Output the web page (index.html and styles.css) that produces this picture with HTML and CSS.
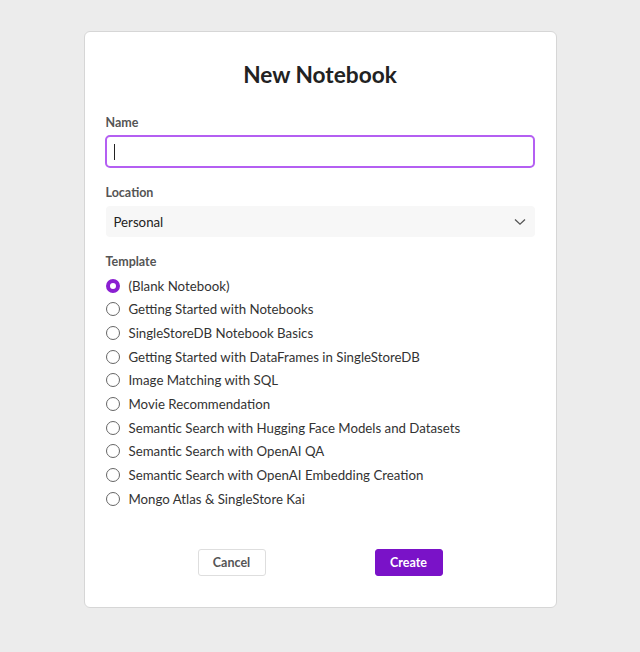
FILE: index.html
```html
<!DOCTYPE html>
<html>
<head>
<meta charset="utf-8">
<link rel="stylesheet" href="styles.css">
</head>
<body>
<div class="card">
  <h1 class="title">New Notebook</h1>
  <div class="field">
    <label class="label">Name</label>
    <div class="input"><span class="caret"></span></div>
  </div>
  <div class="field">
    <label class="label">Location</label>
    <div class="select">
      <span>Personal</span>
      <svg class="chev" width="12" height="8" viewBox="0 0 12 8"><path d="M1 1.5 L6 6.2 L11 1.5" fill="none" stroke="#555" stroke-width="1.3"/></svg>
    </div>
  </div>
  <div class="field">
    <label class="label">Template</label>
    <div class="radios">
      <div class="radio checked"><span class="dot"></span>(Blank Notebook)</div>
      <div class="radio"><span class="dot"></span>Getting Started with Notebooks</div>
      <div class="radio"><span class="dot"></span>SingleStoreDB Notebook Basics</div>
      <div class="radio"><span class="dot"></span>Getting Started with DataFrames in SingleStoreDB</div>
      <div class="radio"><span class="dot"></span>Image Matching with SQL</div>
      <div class="radio"><span class="dot"></span>Movie Recommendation</div>
      <div class="radio"><span class="dot"></span>Semantic Search with Hugging Face Models and Datasets</div>
      <div class="radio"><span class="dot"></span>Semantic Search with OpenAI QA</div>
      <div class="radio"><span class="dot"></span>Semantic Search with OpenAI Embedding Creation</div>
      <div class="radio"><span class="dot"></span>Mongo Atlas &amp; SingleStore Kai</div>
    </div>
  </div>
  <div class="actions">
    <button class="btn cancel">Cancel</button>
    <button class="btn create">Create</button>
  </div>
</div>
</body>
</html>
```
FILE: styles.css
```css
html, body {
  margin: 0;
  padding: 0;
  background: #ececec;
  font-family: Lato, "Open Sans", sans-serif;
}
body {
  padding-top: 31px;
  height: 652px;
  box-sizing: border-box;
}
.card {
  width: 473px;
  box-sizing: border-box;
  margin: 0 auto;
  background: #fff;
  border: 1px solid #d6d6d6;
  border-radius: 6px;
  padding: 29px 21px 31px 21px;
}
.title {
  margin: 0;
  text-align: center;
  font-size: 22.67px;
  line-height: 28px;
  font-weight: 700;
  color: #222;
}
.field {
  display: flex;
  flex-direction: column;
}
.field + .field {
  margin-top: 17px;
}
.title + .field {
  margin-top: 26px;
}
.label {
  font-size: 12.5px;
  line-height: 16px;
  font-weight: 700;
  color: #555;
}
.input {
  margin-top: 4px;
  margin-left: -1px;
  height: 33px;
  box-sizing: border-box;
  border: 2px solid #b45ff2;
  border-radius: 5px;
  display: flex;
  align-items: center;
  padding-left: 7px;
}
.caret {
  width: 1px;
  height: 16px;
  background: #222;
}
.select {
  margin-top: 5px;
  height: 31px;
  background: #f7f7f7;
  border-radius: 4px;
  display: flex;
  align-items: center;
  justify-content: space-between;
  padding: 0 9px 0 8px;
  font-size: 13.25px;
  color: #222;
}
.radios {
  margin-top: 4px;
  display: flex;
  flex-direction: column;
}
.radio {
  height: 23.67px;
  display: flex;
  align-items: center;
  font-size: 13.25px;
  color: #333;
}
.dot {
  width: 14px;
  height: 14px;
  box-sizing: border-box;
  border: 1px solid #666;
  border-radius: 50%;
  margin-right: 9px;
  flex: none;
}
.radio.checked .dot {
  border: 4px solid #8a1fd1;
  background: #fff;
}
.actions {
  margin-top: 38px;
  display: flex;
  justify-content: center;
  gap: 109px;
}
.btn {
  width: 68px;
  height: 27px;
  border-radius: 3px;
  font-family: Lato, "Open Sans", sans-serif;
  font-size: 12.5px;
  font-weight: 700;
  padding: 0;
  cursor: pointer;
}
.cancel {
  background: #fff;
  border: 1px solid #dedede;
  color: #555;
}
.create {
  background: #7a12c8;
  border: 1px solid #7a12c8;
  color: #fff;
}
```
